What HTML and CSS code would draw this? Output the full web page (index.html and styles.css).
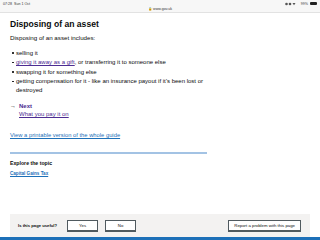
FILE: index.html
```html
<!DOCTYPE html>
<html lang="en">
<head>
    <meta charset="UTF-8">
    <meta name="viewport" content="width=device-width, initial-scale=1.0">
    <title>Disposing of an asset - GOV.UK</title>
    <link rel="stylesheet" href="styles.css">
</head>
<body>
    <div class="status-bar">
        <div class="status-row">
            <span class="clock">07:28&nbsp; Sun 1 Oct</span>
            <span class="status-icons">
                <svg width="14" height="4" viewBox="0 0 14 4">
                    <circle cx="1.5" cy="2" r="1.3" fill="#555"/>
                    <circle cx="5" cy="2" r="1.3" fill="#555"/>
                    <path d="M7.5 1 L10.5 1 L9 3.2 Z" fill="#555"/>
                </svg>
                <span>99%</span>
                <span class="battery"></span>
            </span>
        </div>
        <div class="address">&#128274; www.gov.uk</div>
    </div>

    <main class="content">
        <h1>Disposing of an asset</h1>
        <p>Disposing of an asset includes:</p>
        <ul class="bullets">
            <li>selling it</li>
            <li><a href="#" class="visited">giving it away as a gift</a>, or transferring it to someone else</li>
            <li>swapping it for something else</li>
            <li>getting compensation for it - like an insurance payout if it’s been lost or destroyed</li>
        </ul>

        <nav class="pagination">
            <span class="arrow">&#8594;</span>
            <div>
                <div class="next-label">Next</div>
                <a href="#" class="visited">What you pay it on</a>
            </div>
        </nav>

        <p class="print-link"><a href="#">View a printable version of the whole guide</a></p>

        <section class="related">
            <h2>Explore the topic</h2>
            <a href="#">Capital Gains Tax</a>
        </section>
    </main>

    <div class="feedback">
        <div class="feedback-left">
            <span class="question">Is this page useful?</span>
            <button class="btn btn-small">Yes</button>
            <button class="btn btn-small">No</button>
        </div>
        <button class="btn">Report a problem with this page</button>
    </div>
    <div class="footer-line"></div>
</body>
</html>
```

FILE: styles.css
```css
body {
    margin: 0;
    font-family: "Liberation Sans", Arial, sans-serif;
    color: #0b0c0c;
    background: #fff;
    width: 320px;
    height: 240px;
    overflow: hidden;
    display: flex;
    flex-direction: column;
}
.status-bar {
    background: #f7f7f7;
    border-bottom: 1px solid #e2e2e2;
    height: 12px;
    padding: 0 3px;
    font-size: 3.6px;
    color: #333;
}
.status-row {
    display: flex;
    justify-content: space-between;
    align-items: center;
    height: 7px;
}
.status-icons {
    display: flex;
    align-items: center;
    gap: 2px;
}
.battery {
    width: 7px;
    height: 3px;
    background: #222;
    border-radius: 1px;
}
.address {
    text-align: center;
    font-size: 3.6px;
    line-height: 4px;
}
.content {
    padding: 0 10px;
    width: 197px;
    flex: 1;
}
h1 {
    font-size: 8.6px;
    margin: 6px 0 0;
    line-height: 10px;
}
p {
    font-size: 6.2px;
    line-height: 8px;
    margin: 5px 0 0;
}
.bullets {
    font-size: 6px;
    line-height: 8.4px;
    margin: 7px 0 0;
    padding-left: 6px;
    list-style: none;
}
.bullets li {
    position: relative;
    margin-bottom: 1px;
}
.bullets li::before {
    content: "";
    position: absolute;
    left: -4px;
    top: 3.4px;
    width: 1.6px;
    height: 1.6px;
    border-radius: 50%;
    background: #0b0c0c;
}
a {
    color: #1d70b8;
    text-decoration-thickness: 0.5px;
    text-underline-offset: 1px;
}
a.visited {
    color: #4c2c92;
}
.pagination {
    display: flex;
    gap: 3px;
    font-size: 6px;
    line-height: 8.4px;
    margin-top: 8px;
}
.arrow {
    width: 6px;
}
.next-label {
    font-weight: bold;
    color: #4c2c92;
}
.print-link {
    margin-top: 12px;
    font-size: 5.8px;
}
.related {
    border-top: 2px solid #a3c3e4;
    margin-top: 13px;
    padding-top: 5px;
}
h2 {
    font-size: 5.2px;
    margin: 0;
    line-height: 8px;
}
.related a {
    display: block;
    width: max-content;
    font-size: 4.6px;
    line-height: 6px;
    font-weight: bold;
    margin-top: 4px;
}
.feedback {
    background: #f3f2f1;
    margin: 0 10px;
    height: 23px;
    padding: 0 9px 0 8px;
    display: flex;
    justify-content: space-between;
    align-items: center;
}
.feedback-left {
    display: flex;
    align-items: center;
    gap: 7px;
}
.question {
    font-size: 4.2px;
    font-weight: bold;
    margin-right: 3px;
}
.btn {
    font-family: inherit;
    font-size: 4.3px;
    color: #0b0c0c;
    background: #fff;
    border: 1px solid #505a5f;
    border-bottom-width: 2px;
    height: 12px;
    padding: 0 5px;
}
.btn-small {
    width: 31px;
}
.footer-line {
    height: 3px;
    background: #1d70b8;
}
```
